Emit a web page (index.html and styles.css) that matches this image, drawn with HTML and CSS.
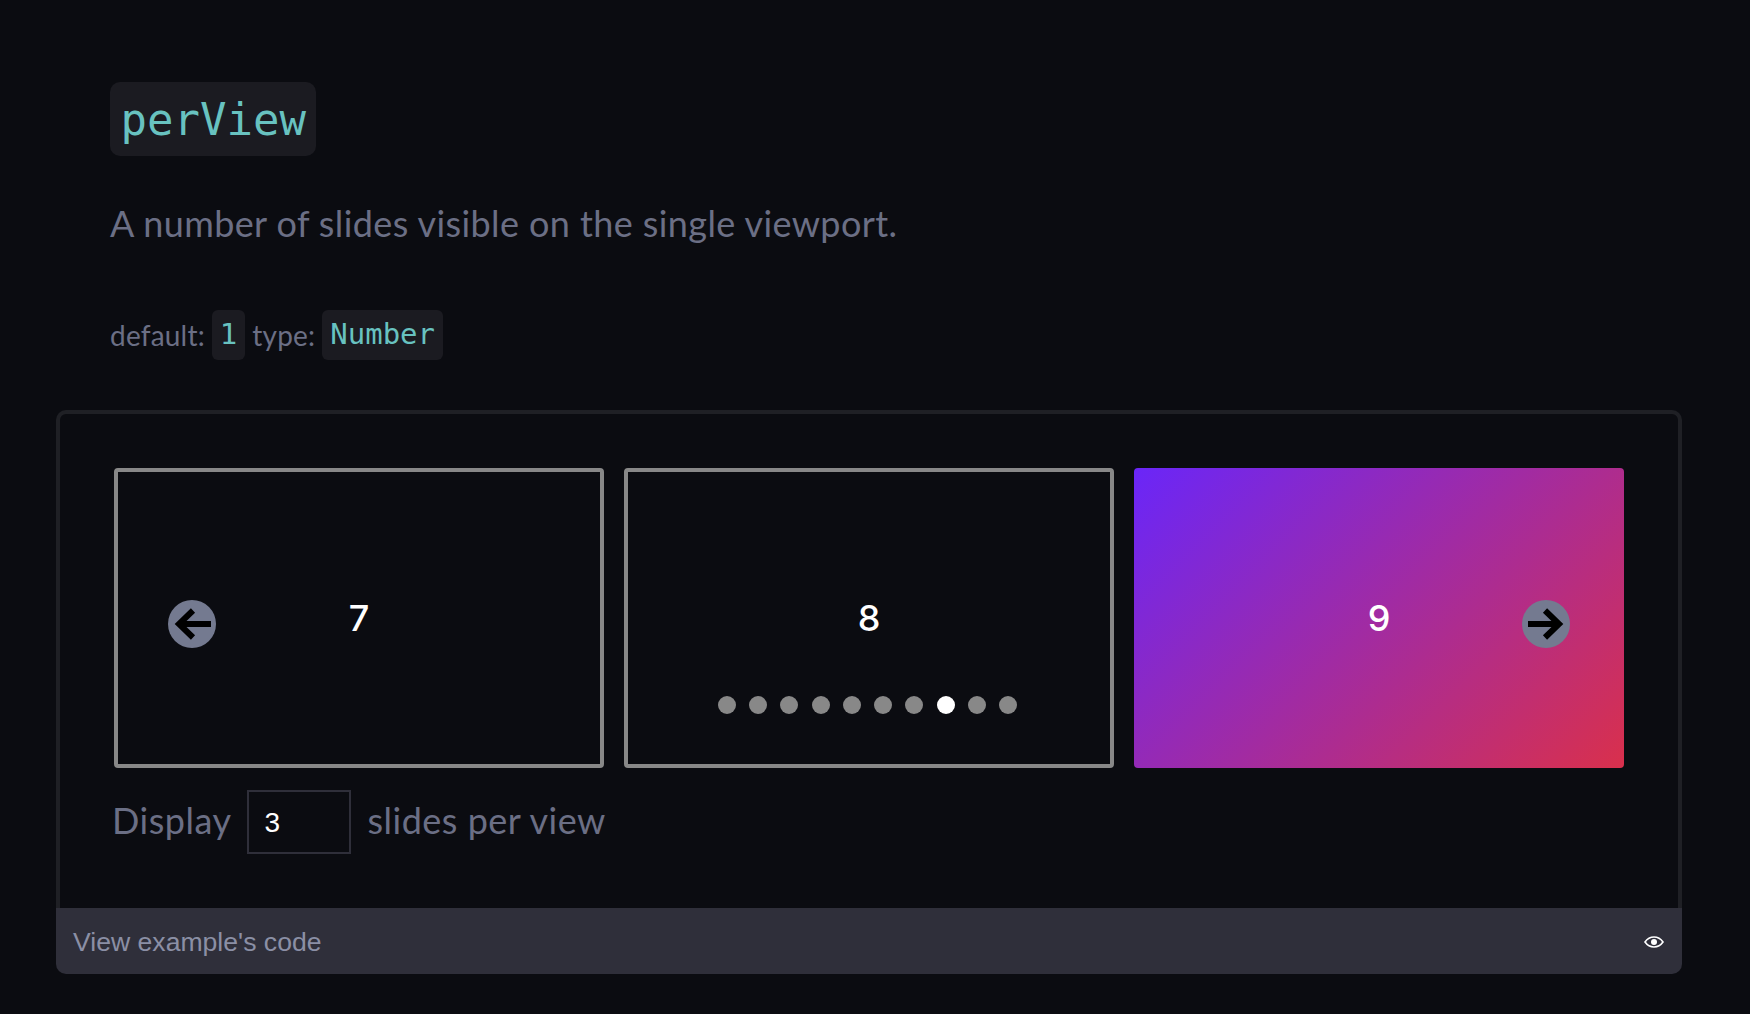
FILE: index.html
```html
<!DOCTYPE html>
<html lang="en">
<head>
<meta charset="utf-8">
<title>perView</title>
<link rel="stylesheet" href="styles.css">
</head>
<body>
<main class="page">
  <section class="intro">
    <h2 class="title"><code class="chip chip-lg">perView</code></h2>
    <p class="desc">A number of slides visible on the single viewport.</p>
    <p class="meta">default: <code class="chip chip-sm">1</code> type: <code class="chip chip-sm">Number</code></p>
  </section>
  <section class="example">
    <div class="demo">
      <div class="slider">
        <div class="slides">
          <div class="slide">7</div>
          <div class="slide">8</div>
          <div class="slide slide-active">9</div>
        </div>
        <button class="arrow arrow-left" aria-label="Previous">
          <svg viewBox="0 0 48 48" width="48" height="48"><path d="M43 24H11M25 10.500 11 24l14 13.500" fill="none" stroke="#000" stroke-width="6"/></svg>
        </button>
        <button class="arrow arrow-right" aria-label="Next">
          <svg viewBox="0 0 48 48" width="48" height="48"><path d="M6 24h32M23 10.500 37 24 23 37.500" fill="none" stroke="#000" stroke-width="6"/></svg>
        </button>
        <div class="dots">
          <span class="dot"></span><span class="dot"></span><span class="dot"></span><span class="dot"></span><span class="dot"></span><span class="dot"></span><span class="dot"></span><span class="dot dot-on"></span><span class="dot"></span><span class="dot"></span>
        </div>
      </div>
      <div class="control">
        <label class="control-label" for="pv">Display</label>
        <input class="control-input" id="pv" type="number" value="3">
        <span class="control-label">slides per view</span>
      </div>
    </div>
    <div class="codebar">
      <span>View example's code</span>
      <svg class="eye" viewBox="0 0 20 12" width="20" height="12"><path d="M1 6c2.300-3.300 5.300-5 9-5s6.700 1.700 9 5c-2.300 3.300-5.300 5-9 5S3.300 9.300 1 6z" fill="none" stroke="#fff" stroke-width="1.600"/><circle cx="10" cy="6" r="3" fill="#fff"/></svg>
    </div>
  </section>
</main>
</body>
</html>
```
FILE: styles.css
```css
* { box-sizing: border-box; }
html, body { margin: 0; height: 100%; }
body {
  background: #0b0c11;
  overflow: hidden;
  font-family: "Lato", "Noto Sans", sans-serif;
}
.page { padding: 82px 68px 0 56px; }
.intro { padding-left: 54px; }
.title { margin: 0; height: 74px; font-weight: 400; }
code { font-family: "DejaVu Sans Mono", monospace; color: #68c2c0; }
.chip { display: inline-block; background: #1b1b21; }
.chip-lg {
  height: 74px;
  line-height: 75px;
  padding: 0 10.500px;
  border-radius: 10px;
  font-size: 44px;
}
.desc {
  margin: 44px 0 0;
  height: 46px;
  line-height: 46px;
  font-size: 36px;
  letter-spacing: 0.4px;
  color: #6b6f85;
}
.meta {
  display: flex;
  align-items: center;
  gap: 7px;
  margin: 64px 0 0;
  height: 50px;
  font-size: 28px;
  letter-spacing: 0.2px;
  color: #6b6f85;
}
.chip-sm {
  height: 50px;
  line-height: 48px;
  padding: 0 8px;
  border-radius: 6px;
  font-size: 29px;
  letter-spacing: 0;
}
.example { margin-top: 50px; }
.demo {
  height: 498px;
  padding: 54px 54px 0;
  border: 4px solid #1f2025;
  border-bottom: 0;
  border-radius: 10px 10px 0 0;
}
.slider { position: relative; }
.slides { display: grid; grid-template-columns: repeat(3, 1fr); gap: 20px; }
.slide {
  height: 300px;
  display: flex;
  align-items: center;
  justify-content: center;
  border: 4px solid #888;
  border-radius: 4px;
  color: #fff;
  font-family: "Inter", sans-serif;
  font-weight: 500;
  font-size: 36px;
}
.slide-active {
  border: 0;
  background: linear-gradient(135deg, #6a26f8, #d9304c);
}
.arrow {
  position: absolute;
  top: 132px;
  width: 48px;
  height: 48px;
  padding: 0;
  border: 0;
  border-radius: 50%;
  background: #747a90;
}
.arrow svg { display: block; }
.arrow-left { left: 54px; }
.arrow-right { right: 54px; }
.dots {
  position: absolute;
  top: 228px;
  left: 0;
  right: 3px;
  display: flex;
  justify-content: center;
  gap: 13.330px;
}
.dot { width: 18px; height: 18px; border-radius: 50%; background: #888; }
.dot-on { background: #fff; }
.control {
  display: flex;
  align-items: center;
  gap: 16px;
  margin: 22px 0 0 -2px;
}
.control-label {
  font-size: 36px;
  letter-spacing: 0.5px;
  line-height: 56px;
  height: 60px;
  color: #6b6f85;
}
.control-input {
  width: 104px;
  height: 64px;
  padding: 2px 15px 0;
  border: 2px solid #2f2f3a;
  background: transparent;
  color: #fff;
  font-family: "Liberation Sans", sans-serif;
  font-size: 28px;
  appearance: textfield;
  outline: none;
}
.codebar {
  display: flex;
  align-items: center;
  justify-content: space-between;
  height: 66px;
  padding: 2px 18px 0 17px;
  background: #2f2f3a;
  border-radius: 0 0 10px 10px;
  color: #8b8fa5;
  font-family: "Liberation Sans", sans-serif;
  font-size: 26.600px;
}
.eye { display: block; }
```
